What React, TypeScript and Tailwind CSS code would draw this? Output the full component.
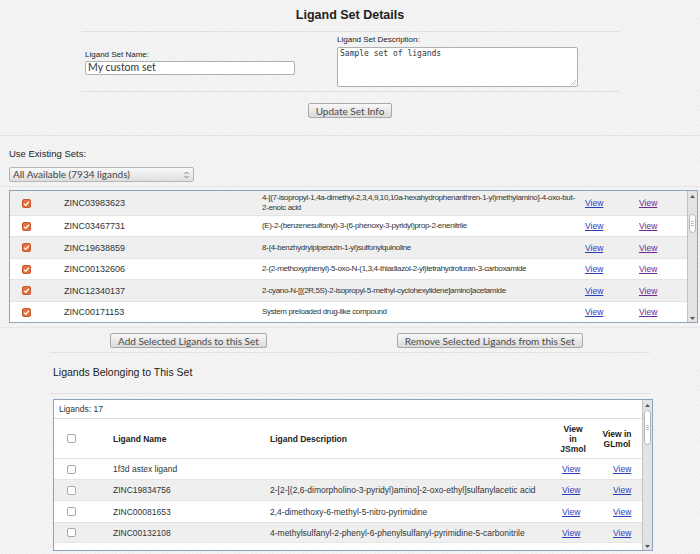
import { ReactNode } from "react";

type Row = { name: string; desc: ReactNode };

const existing: Row[] = [
  {
    name: "ZINC03983623",
    desc: (
      <>
        4-[(7-isopropyl-1,4a-dimethyl-2,3,4,9,10,10a-hexahydrophenanthren-1-yl)methylamino]-4-oxo-but-
        <br />
        2-enoic acid
      </>
    ),
  },
  { name: "ZINC03467731", desc: "(E)-2-(benzenesulfonyl)-3-(6-phenoxy-3-pyridyl)prop-2-enenitrile" },
  { name: "ZINC19638859", desc: "8-(4-benzhydrylpiperazin-1-yl)sulfonylquinoline" },
  { name: "ZINC00132606", desc: "2-(2-methoxyphenyl)-5-oxo-N-(1,3,4-thiadiazol-2-yl)tetrahydrofuran-3-carboxamide" },
  { name: "ZINC12340137", desc: "2-cyano-N-[[(2R,5S)-2-isopropyl-5-methyl-cyclohexylidene]amino]acetamide" },
  { name: "ZINC00171153", desc: "System preloaded drug-like compound" },
];

const rowHeights = ["h-[24px]", "h-[21px]", "h-[22px]", "h-[21px]", "h-[22px]", "h-[21px]"];

const inSet: Row[] = [
  { name: "1f3d astex ligand", desc: "" },
  { name: "ZINC19834756", desc: "2-[2-[(2,6-dimorpholino-3-pyridyl)amino]-2-oxo-ethyl]sulfanylacetic acid" },
  { name: "ZINC00081653", desc: "2,4-dimethoxy-6-methyl-5-nitro-pyrimidine" },
  { name: "ZINC00132108", desc: "4-methylsulfanyl-2-phenyl-6-phenylsulfanyl-pyrimidine-5-carbonitrile" },
];

function OrangeCheck() {
  return (
    <span className="w-[9px] h-[9px] rounded-[2px] bg-[#e4703f] border border-[#c9582b] flex items-center justify-center">
      <svg width="7" height="7" viewBox="0 0 8 8">
        <path d="M1.2 4.2 L3.2 6 L6.8 1.8" stroke="#fff" strokeWidth="1.5" fill="none" />
      </svg>
    </span>
  );
}

function EmptyCheck() {
  return <span className="w-[9px] h-[9px] rounded-[2px] bg-white border border-[#a9a9a9] block" />;
}

function Btn({ children }: { children: ReactNode }) {
  return (
    <button className="h-[15px] px-[7px] rounded-[2px] border border-[#a9a9a9] bg-gradient-to-b from-[#f8f8f8] to-[#dadada] text-[#4a4a4a] text-[10px] leading-none font-['Lato',sans-serif]">
      {children}
    </button>
  );
}

function Scrollbar({ thumbTop, thumbH }: { thumbTop: string; thumbH: string }) {
  return (
    <div className="absolute right-0 top-0 bottom-0 w-[10px] bg-[#e3e3e3] border-l border-[#c2c2c2] flex flex-col">
      <div className="h-[10px] flex items-center justify-center">
        <svg width="5" height="3" viewBox="0 0 5 3"><path d="M0 3 L2.5 0 L5 3 Z" fill="#555" /></svg>
      </div>
      <div className={`${thumbTop} mx-[1px] ${thumbH} rounded-[4px] bg-white border border-[#b5b5b5] flex flex-col items-center justify-center gap-[1px]`}>
        <span className="w-[3px] h-px bg-[#bbb]" />
        <span className="w-[3px] h-px bg-[#bbb]" />
        <span className="w-[3px] h-px bg-[#bbb]" />
      </div>
      <div className="flex-1" />
      <div className="h-[8px] flex items-center justify-center">
        <svg width="5" height="3" viewBox="0 0 5 3"><path d="M0 0 L2.5 3 L5 0 Z" fill="#555" /></svg>
      </div>
    </div>
  );
}

export default function App() {
  return (
    <div className="w-[700px] h-[554px] overflow-hidden bg-[repeating-linear-gradient(135deg,#f4f4f4_0px,#f4f4f4_2px,#efefef_2px,#efefef_3px)] text-[#333] font-['Liberation_Sans',Arial,sans-serif]">
      {/* Header */}
      <div className="h-[31px] flex items-center justify-center">
        <h1 className="text-[12.5px] font-bold text-[#222]">Ligand Set Details</h1>
      </div>

      <div className="ml-[81px] w-[539px] h-[61px] border-y border-[#e0e0e0] flex">
        <div className="w-[256px] pl-[4px] pt-[18px]">
          <div className="text-[8px] leading-[10px] text-[#222]">Ligand Set Name:</div>
          <div className="mt-[1px] w-[210px] h-[14px] bg-white border border-[#b0b0b0] rounded-[2px] pl-[2px] flex items-center text-[10.5px] text-[#333] font-['Lato',sans-serif]">
            My custom set
          </div>
        </div>
        <div className="pt-[3px]">
          <div className="text-[8px] leading-[10px] text-[#222]">Ligand Set Description:</div>
          <div className="relative mt-[2px] w-[241px] h-[40px] bg-white border border-[#b0b0b0] rounded-[2px] px-[2px] pt-[1px] text-[8px] leading-[10px] text-[#333] font-['DejaVu_Sans_Mono',monospace]">
            Sample set of ligands
            <svg className="absolute right-[1px] bottom-[1px]" width="5" height="5" viewBox="0 0 5 5">
              <path d="M5 0 L0 5 M5 2.5 L2.5 5" stroke="#aaa" strokeWidth="0.8" />
            </svg>
          </div>
        </div>
      </div>

      <div className="mt-[11px] flex justify-center">
        <Btn>Update Set Info</Btn>
      </div>
      <div className="mt-[17px] h-px bg-[#e2e2e2]" />

      {/* Existing sets */}
      <div className="mt-[13px] pl-[9px] text-[9.5px] leading-[10px] text-[#222]">Use Existing Sets:</div>
      <div className="mt-[8px] ml-[9px] w-[185px] h-[15px] rounded-[2px] border border-[#b5b5b5] bg-gradient-to-b from-[#fafafa] to-[#dedede] flex items-center pl-[3px] pr-[4px] text-[10px] text-[#444] font-['Lato',sans-serif]">
        <span className="flex-1">All Available (7934 ligands)</span>
        <svg width="5" height="8" viewBox="0 0 5 8">
          <path d="M0.5 3 L2.5 1 L4.5 3 M0.5 5 L2.5 7 L4.5 5" stroke="#666" strokeWidth="0.8" fill="none" />
        </svg>
      </div>
      <div className="mt-[4px] h-px bg-[#e6e6e6]" />

      <div className="relative mt-[3px] ml-[9px] w-[689px] border border-[#8ea3bd] bg-white overflow-hidden text-[8.5px] leading-[10px]">
        {existing.map((r, i) => (
          <div
            key={r.name}
            className={`${rowHeights[i]} flex items-center ${i % 2 === 0 ? "bg-[#efefef]" : "bg-white"} ${i > 0 ? "border-t border-[#e4e4e4]" : ""}`}
          >
            <div className="w-[54px] pl-[12px]">
              <OrangeCheck />
            </div>
            <div className="w-[198px] text-[9px]">{r.name}</div>
            <div className="w-[323px] whitespace-nowrap text-[8px] tracking-[-0.35px] leading-[10px]">{r.desc}</div>
            <div className="w-[54px]">
              <span className="underline text-[#2a3ebd]">View</span>
            </div>
            <div>
              <span className="underline text-[#6e2a8e]">View</span>
            </div>
          </div>
        ))}
        <Scrollbar thumbTop="mt-[13px]" thumbH="h-[19px]" />
      </div>

      <div className="mt-[4px] h-px bg-[#e6e6e6]" />
      <div className="mt-[5px] flex">
        <div className="ml-[110px] flex">
          <Btn>Add Selected Ligands to this Set</Btn>
        </div>
        <div className="ml-[130px] flex">
          <Btn>Remove Selected Ligands from this Set</Btn>
        </div>
      </div>
      <div className="mt-[4px] ml-[50px] w-[600px] h-px bg-[#e2e2e2]" />

      {/* Ligands in set */}
      <div className="h-[40px] pl-[53px] flex items-center text-[10.5px] text-[#222]">Ligands Belonging to This Set</div>
      <div className="ml-[50px] w-[600px] h-px bg-[#e2e2e2]" />

      <div className="relative mt-[5px] ml-[53px] w-[600px] h-[152px] border border-[#8ea3bd] bg-white overflow-hidden text-[8.5px] leading-[10px]">
        <div className="h-[19px] flex items-center pl-[5px] border-b border-[#dcdcdc] mr-[10px]">Ligands: 17</div>
        <div className="h-[39px] flex items-center font-bold text-[#222] mr-[10px]">
          <div className="w-[59px] pl-[13px] font-normal">
            <EmptyCheck />
          </div>
          <div className="w-[157px]">Ligand Name</div>
          <div className="w-[282px]">Ligand Description</div>
          <div className="w-[42px] text-center">
            View
            <br />
            in
            <br />
            JSmol
          </div>
          <div className="w-[46px] text-center">
            View in
            <br />
            GLmol
          </div>
        </div>
        {inSet.map((r, i) => (
          <div
            key={r.name}
            className={`${i === 3 ? "h-[20px]" : i === 2 ? "h-[22px]" : "h-[21px]"} flex items-center border-t border-[#e4e4e4] mr-[10px] ${i % 2 === 1 ? "bg-[#efefef]" : "bg-white"}`}
          >
            <div className="w-[59px] pl-[13px]">
              <EmptyCheck />
            </div>
            <div className="w-[157px]">{r.name}</div>
            <div className="w-[292px] whitespace-nowrap">{r.desc}</div>
            <div className="w-[51px]">
              <span className="underline text-[#2a3ebd]">View</span>
            </div>
            <div>
              <span className="underline text-[#2a3ebd]">View</span>
            </div>
          </div>
        ))}
        <div className="h-[20px] border-t border-[#e4e4e4] mr-[10px] bg-white" />
        <Scrollbar thumbTop="mt-0" thumbH="h-[35px]" />
      </div>
    </div>
  );
}
